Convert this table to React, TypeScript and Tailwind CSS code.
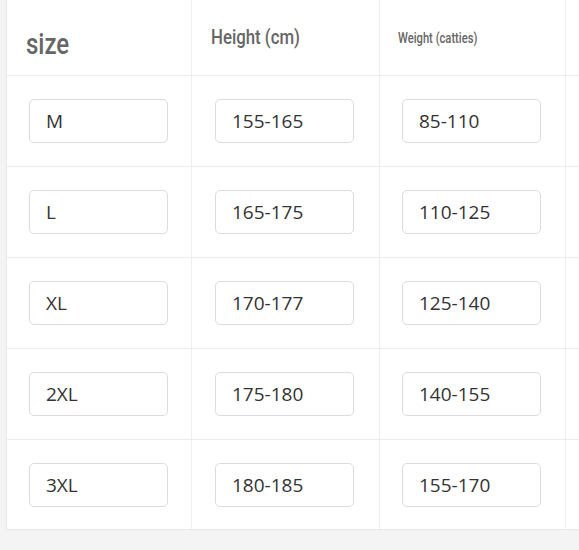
const rows = [
  ["M", "155-165", "85-110"],
  ["L", "165-175", "110-125"],
  ["XL", "170-177", "125-140"],
  ["2XL", "175-180", "140-155"],
  ["3XL", "180-185", "155-170"],
];

function Box({ value }: { value: string }) {
  return (
    <div className="flex h-[44px] w-[139px] items-center rounded-[5px] border border-[#dcdcdc] bg-white pl-[16px] pt-[1px] text-[19px] text-[#333] [font-family:'Open_Sans',sans-serif]">
      {value}
    </div>
  );
}

const head = "inline-block origin-left scale-x-[0.8] font-medium text-[#666] [font-family:'Roboto',sans-serif]";

export default function App() {
  return (
    <div className="h-[550px] w-[579px] overflow-hidden bg-[#f4f4f4]">
      <div className="ml-[6px] w-[600px] border-b border-l border-[#e8e8e8] bg-white">
        <div className="grid h-[76px] grid-cols-[185px_188px_186px_41px] border-b border-[#ececec]">
          <div className="flex items-center border-r border-[#efefef] pl-[19px] pt-[12px]">
            <span className={`${head} text-[30px]`}>size</span>
          </div>
          <div className="flex items-center border-r border-[#efefef] pl-[19px]">
            <span className={`${head} text-[21px]`}>Height (cm)</span>
          </div>
          <div className="flex items-center border-r border-[#efefef] pl-[18px] pt-[1px]">
            <span className={`${head} text-[14px]`}>Weight (catties)</span>
          </div>
          <div />
        </div>
        {rows.map((r, i) => (
          <div
            key={i}
            className={`grid grid-cols-[185px_188px_186px_41px] ${i < rows.length - 1 ? "h-[91px] border-b border-[#ececec]" : "h-[89px]"}`}
          >
            <div className="flex items-center border-r border-[#efefef] pl-[22px]">
              <Box value={r[0]} />
            </div>
            <div className="flex items-center border-r border-[#efefef] pl-[23px]">
              <Box value={r[1]} />
            </div>
            <div className="flex items-center border-r border-[#efefef] pl-[22px]">
              <Box value={r[2]} />
            </div>
            <div />
          </div>
        ))}
      </div>
    </div>
  );
}
